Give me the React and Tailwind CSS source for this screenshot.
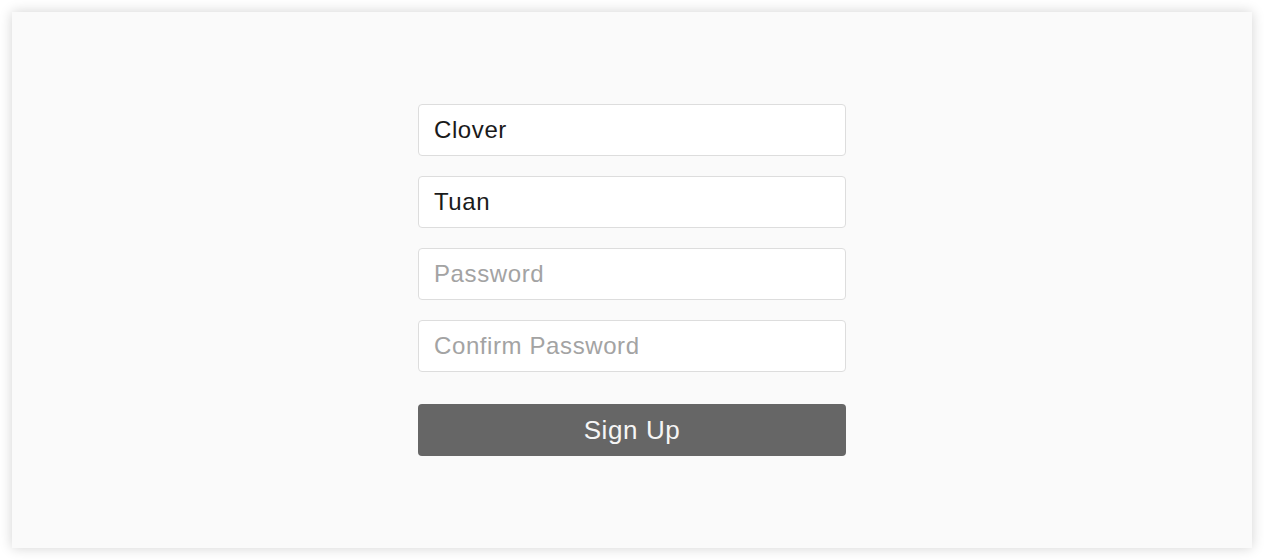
export default function App() {
  const inputCls =
    "h-[52px] w-full rounded-[4px] border border-[#dddddd] bg-white px-[15px] text-[24px] tracking-[0.6px] text-[#1a1a1a] outline-none placeholder:text-[#a3a3a3]";
  return (
    <div className="h-[560px] w-full bg-white p-3" style={{ fontFamily: '"Liberation Sans", Arial, sans-serif' }}>
      <div className="flex h-[536px] w-full items-center justify-center bg-[#fafafa] shadow-[0_0_12px_rgba(0,0,0,0.18)]">
        <form className="flex w-[428px] flex-col" onSubmit={(e) => e.preventDefault()}>
          <input className={inputCls} defaultValue="Clover" />
          <input className={inputCls + " mt-5"} defaultValue="Tuan" />
          <input className={inputCls + " mt-5"} type="password" placeholder="Password" />
          <input className={inputCls + " mt-5"} type="password" placeholder="Confirm Password" />
          <button className="mt-8 h-[52px] w-full rounded-[4px] bg-[#666666] text-[26px] tracking-[0.6px] text-[#f5f5f5]">
            Sign Up
          </button>
        </form>
      </div>
    </div>
  );
}
